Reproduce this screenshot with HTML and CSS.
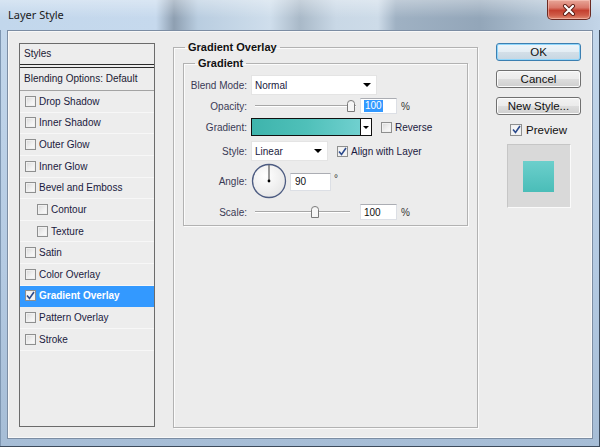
FILE: index.html
```html
<!DOCTYPE html>
<html>
<head>
<meta charset="utf-8">
<link rel="stylesheet" href="styles.css">
</head>
<body>
<div class="window">
  <div class="titlebar">
    <span class="title">Layer Style</span>
    <div class="close">
      <svg width="14" height="12" viewBox="0 0 14 12"><path d="M3 2 L11 10 M11 2 L3 10" stroke="#5b1c14" stroke-width="4" stroke-linecap="round"/><path d="M3 2 L11 10 M11 2 L3 10" stroke="#ffffff" stroke-width="2.2" stroke-linecap="round"/></svg>
    </div>
  </div>
  <div class="client">
    <div class="styles-panel">
      <div class="panel-head">Styles</div>
      <div class="panel-blend">Blending Options: Default</div>
      <div class="panel-row"><span class="cb"></span>Drop Shadow</div>
      <div class="panel-row"><span class="cb"></span>Inner Shadow</div>
      <div class="panel-row"><span class="cb"></span>Outer Glow</div>
      <div class="panel-row"><span class="cb"></span>Inner Glow</div>
      <div class="panel-row"><span class="cb"></span>Bevel and Emboss</div>
      <div class="panel-row sub"><span class="cb"></span>Contour</div>
      <div class="panel-row sub"><span class="cb"></span>Texture</div>
      <div class="panel-row"><span class="cb"></span>Satin</div>
      <div class="panel-row"><span class="cb"></span>Color Overlay</div>
      <div class="panel-row selected"><span class="cb checked"><svg width="9" height="9" viewBox="0 0 9 9"><path d="M1 4.5 L3.5 7.5 L8 1" fill="none" stroke="#2b4a8c" stroke-width="1.6"/></svg></span>Gradient Overlay</div>
      <div class="panel-row"><span class="cb"></span>Pattern Overlay</div>
      <div class="panel-row"><span class="cb"></span>Stroke</div>
    </div>

    <fieldset class="group outer">
      <legend>Gradient Overlay</legend>
      <fieldset class="group inner">
        <legend>Gradient</legend>
        <div class="row r-blend">
          <span class="lbl">Blend Mode:</span>
          <div class="select w-blend"><span>Normal</span><span class="tri"></span></div>
        </div>
        <div class="row r-opacity">
          <span class="lbl">Opacity:</span>
          <div class="slider s-long"><span class="track"></span><span class="thumb t-opacity"><svg width="8" height="12" viewBox="0 0 8 12"><path d="M0.5 3.5 Q0.5 0.5 4 0.5 Q7.5 0.5 7.5 3.5 V11.5 H0.5 Z" fill="#f6f6f6" stroke="#7a7a7a"/></svg></span></div>
          <div class="field f-num"><span class="sel">100</span></div>
          <span class="unit">%</span>
        </div>
        <div class="row r-gradient">
          <span class="lbl">Gradient:</span>
          <div class="gradient"><span class="swatch"></span><span class="gbtn"><span class="tri"></span></span></div>
          <span class="cb opt"></span><span class="opt-lbl">Reverse</span>
        </div>
        <div class="row r-style">
          <span class="lbl">Style:</span>
          <div class="select w-style"><span>Linear</span><span class="tri"></span></div>
          <span class="cb checked opt"><svg width="9" height="9" viewBox="0 0 9 9"><path d="M1 4.5 L3.5 7.5 L8 1" fill="none" stroke="#2b4a8c" stroke-width="1.6"/></svg></span><span class="opt-lbl">Align with Layer</span>
        </div>
        <div class="row r-angle">
          <span class="lbl">Angle:</span>
          <svg class="dial" width="36" height="36" viewBox="0 0 36 36">
            <defs><radialGradient id="dg" cx="40%" cy="35%" r="70%"><stop offset="0" stop-color="#ffffff"/><stop offset="1" stop-color="#e6e6e6"/></radialGradient></defs>
            <circle cx="18" cy="18" r="16.5" fill="url(#dg)" stroke="#4d5c82" stroke-width="1.3"/>
            <line x1="18" y1="18" x2="18" y2="2" stroke="#5a5a5a" stroke-width="1.2"/>
            <circle cx="18" cy="18" r="1.4" fill="#000"/>
          </svg>
          <div class="field f-angle">90</div>
          <span class="deg">°</span>
        </div>
        <div class="row r-scale">
          <span class="lbl">Scale:</span>
          <div class="slider s-short"><span class="track"></span><span class="thumb t-scale"><svg width="8" height="12" viewBox="0 0 8 12"><path d="M0.5 3.5 Q0.5 0.5 4 0.5 Q7.5 0.5 7.5 3.5 V11.5 H0.5 Z" fill="#f6f6f6" stroke="#7a7a7a"/></svg></span></div>
          <div class="field f-num f-scale">100</div>
          <span class="unit">%</span>
        </div>
      </fieldset>
    </fieldset>

    <div class="actions">
      <div class="btn default">OK</div>
      <div class="btn">Cancel</div>
      <div class="btn">New Style...</div>
      <div class="preview-toggle"><span class="cb checked"><svg width="9" height="9" viewBox="0 0 9 9"><path d="M1 4.5 L3.5 7.5 L8 1" fill="none" stroke="#2b4a8c" stroke-width="1.6"/></svg></span><span>Preview</span></div>
      <div class="preview"><span class="preview-sq"></span></div>
    </div>
  </div>
</div>
</body>
</html>
```

FILE: styles.css
```css
* { box-sizing: border-box; }
html, body { margin: 0; padding: 0; }
body {
  width: 600px;
  height: 447px;
  overflow: hidden;
  font-family: "Liberation Sans", Arial, sans-serif;
  font-size: 10px;
  color: #1b1b2e;
}
.window {
  width: 600px;
  height: 447px;
  display: flex;
  flex-direction: column;
  background: linear-gradient(180deg, #c4d8ec 0%, #b4cae2 60%, #a6bdd6 100%);
  box-shadow: inset -1px -1px 0 #3d4b5c, inset 1px 0 0 #7f97b2;
}
.titlebar {
  height: 30px;
  display: flex;
  align-items: flex-start;
  padding-left: 8px;
  background:
    linear-gradient(180deg, rgba(255,255,255,0.35), rgba(255,255,255,0) 60%),
    linear-gradient(90deg, #c2d7ec 0%, #c6d9ed 26%, #8e9fb1 29%, #b9cde0 33%, #cfdeec 45%, #a9b9c8 50%, #c9d8e6 56%, #cddbe8 63%, #9fb1c3 66%, #93a6b9 80%, #a8bbcd 88%, #c3d5e8 100%);
}
.title {
  font-family: "Noto Sans", sans-serif;
  font-size: 11px;
  color: #1a1a1a;
  margin-top: 7px;
}
.close {
  margin-left: auto;
  margin-right: 9px;
  width: 44px;
  height: 20px;
  border: 1px solid #6b2a22;
  border-top: 0;
  border-radius: 0 0 5px 5px;
  background: linear-gradient(180deg, #e8a698 0%, #d9786a 40%, #c4402f 55%, #cf5c48 80%, #e08a72 100%);
  box-shadow: inset 0 0 0 1px rgba(255,210,200,0.5);
  display: flex;
  align-items: center;
  justify-content: center;
}
.client {
  flex: 1;
  margin: 0 7px 8px 7px;
  border: 1px solid #7c8da3;
  box-shadow: inset 0 0 0 1px #f8f8f8;
  background: #ececec;
  display: flex;
  align-items: flex-start;
  padding: 12px 0 0 11px;
}

/* styles list */
.styles-panel {
  width: 136px;
  height: 384px;
  border: 1px solid #6b6b6b;
  background: #ededed;
  flex: none;
}
.panel-head {
  height: 21px;
  border-bottom: 1px solid #2a2a2a;
  padding-left: 4px;
  line-height: 20px;
  color: #1a1a33;
}
.panel-blend {
  margin-top: 2px;
  height: 24px;
  border-top: 1px solid #2a2a2a;
  border-bottom: 1px solid #a3a3a3;
  padding-left: 4px;
  line-height: 22px;
  color: #1a1a33;
}
.panel-row {
  height: 21.64px;
  border-bottom: 1px solid #f7f7f7;
  display: flex;
  align-items: center;
  padding-left: 5px;
  color: #1a1a40;
}
.panel-row.sub { padding-left: 17px; }
.panel-row.selected {
  background: #3399ff;
  color: #fff;
  font-weight: bold;
  border-bottom-color: #3399ff;
}
.cb {
  width: 11px;
  height: 11px;
  flex: none;
  border: 1px solid #8e8f8f;
  background: linear-gradient(135deg, #d8d8d8 0%, #f2f2f2 60%, #fbfbfb 100%);
  box-shadow: inset 0 0 0 1px #f0f0f0;
  margin-right: 3px;
  display: flex;
  align-items: center;
  justify-content: center;
}
.cb.checked { background: #f4f4f4; }
.cb svg { display: block; }

/* fieldsets */
.group {
  margin: 0;
  border: 1px solid #b2b2b2;
  box-shadow: inset 1px 1px 0 #fbfbfb, 1px 1px 0 #fbfbfb;
  min-width: 0;
}
.group legend {
  font-weight: bold;
  font-size: 11px;
  line-height: 14px;
  color: #111;
  padding: 0 3px;
  margin-left: 2px;
}
.outer {
  margin-left: 18px;
  margin-top: -3px;
  width: 305px;
  height: 388px;
  padding: 0 9px;
  flex: none;
}
.inner {
  margin-top: 2px;
  padding: 0 0 5px 0;
}
.inner legend { margin-left: 11px; }

.row {
  display: flex;
  align-items: center;
}
.lbl {
  width: 63px;
  margin-right: 4px;
  text-align: right;
  color: #3a3a55;
  flex: none;
}
.r-blend { margin-top: 5px; height: 20px; }
.r-opacity { margin-top: 3px; height: 16px; }
.r-gradient { margin-top: 4px; height: 18px; }
.r-style { margin-top: 5px; height: 20px; }
.r-angle { margin-top: 2px; height: 36px; }
.r-scale { margin-top: 5px; height: 16px; }

.select {
  height: 20px;
  background: #fff;
  border: 1px solid #e4e4e4;
  display: flex;
  align-items: center;
  justify-content: space-between;
  padding: 0 5px 0 3px;
  color: #1a1a40;
}
.w-blend { width: 126px; }
.w-style { width: 77px; }
.tri {
  width: 0;
  height: 0;
  border-left: 4px solid transparent;
  border-right: 4px solid transparent;
  border-top: 4px solid #000;
}

.slider {
  position: relative;
  height: 16px;
  flex: none;
}
.s-long { width: 106px; }
.s-short { width: 106px; }
.track {
  position: absolute;
  left: 4px;
  top: 7px;
  height: 1px;
  background: #a7a7a7;
  box-shadow: 0 1px 0 #fff;
}
.s-long .track { width: 101px; }
.s-short .track { width: 95px; }
.thumb {
  position: absolute;
  top: 2px;
}
.thumb svg { display: block; }
.t-opacity { left: 96px; }
.t-scale { left: 60px; }

.field {
  height: 16px;
  background: #fff;
  border: 1px solid #dcdfe5;
  border-top-color: #abadb3;
  display: flex;
  align-items: center;
  padding-left: 3px;
  color: #111;
  flex: none;
}
.f-num { width: 37px; margin-left: 3px; }
.sel { background: #3399ff; color: #fff; padding: 0 1px; line-height: 12px; }
.unit { margin-left: 4px; color: #333; }

.gradient {
  width: 121px;
  height: 18px;
  border: 1px solid #111;
  display: flex;
  flex: none;
}
.swatch {
  flex: 1;
  background: linear-gradient(90deg, #3eb4ac 0%, #4fc0b9 50%, #70d0cf 100%);
  border-right: 1px solid #111;
}
.gbtn {
  width: 10px;
  background: #fff;
  display: flex;
  align-items: center;
  justify-content: center;
}
.gbtn .tri { border-left-width: 3px; border-right-width: 3px; border-top-width: 3px; }
.cb.opt { margin-left: 9px; margin-right: 3px; }
.r-gradient .cb.opt { margin-left: 9px; }
.r-style .cb.opt { margin-left: 9px; }
.opt-lbl { color: #1a1a40; }

.dial { display: block; margin-left: 0; flex: none; }
.f-angle { width: 41px; height: 18px; margin-left: 3px; margin-top: 1px; padding-left: 4px; }
.deg { margin-left: 3px; align-self: flex-start; margin-top: 10px; font-size: 10px; color: #333; }

/* right column */
.actions {
  margin-left: 18px;
  width: 85px;
  display: flex;
  flex-direction: column;
  align-items: center;
  flex: none;
  font-size: 11.5px;
}
.btn {
  width: 85px;
  height: 18px;
  border: 1px solid #707070;
  border-radius: 3px;
  background: linear-gradient(180deg, #f2f2f2 0%, #ebebeb 50%, #dddddd 51%, #cfcfcf 100%);
  box-shadow: inset 0 0 0 1px #fbfbfb;
  display: flex;
  align-items: center;
  justify-content: center;
  color: #111;
  margin-bottom: 9px;
}
.btn.default {
  border-color: #3c7fb1;
  box-shadow: inset 0 0 0 1px #8fd6fb;
  background: linear-gradient(180deg, #eef5fa 0%, #e3edf4 50%, #d3dfe8 51%, #c6d6e2 100%);
}
.btn + .btn { margin-top: 0; }
.preview-toggle {
  margin-top: -1px;
  height: 13px;
  display: flex;
  align-items: center;
  color: #111;
}
.preview-toggle .cb { margin-right: 4px; width: 12px; height: 12px; }
.preview {
  margin-top: 8px;
  width: 64px;
  height: 64px;
  background: #d9d9d9;
  border: 1px solid #c6c6c6;
  border-right-color: #fafafa;
  border-bottom-color: #fafafa;
  display: flex;
  align-items: center;
  justify-content: center;
}
.preview-sq {
  width: 31px;
  height: 31px;
  background: linear-gradient(180deg, #6ccfcc, #4abdb8);
}
```
